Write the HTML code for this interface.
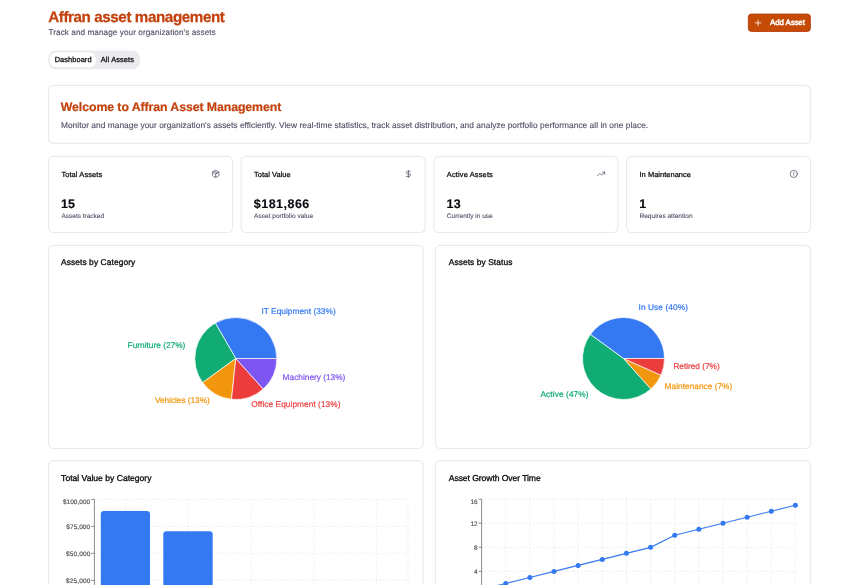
<!DOCTYPE html>
<html><head><meta charset="utf-8"><title>Affran asset management</title>
<style>
html,body{margin:0;padding:0;background:#fff;width:856px;height:585px;overflow:hidden}
svg{display:block;will-change:transform;font-family:"Liberation Sans", sans-serif;text-rendering:geometricPrecision}
</style></head>
<body>
<svg width="856" height="585" viewBox="0 0 856 585">
<text x="48.20" y="22.00" font-size="15.2" font-weight="700" fill="#c2410c" textLength="176.66" lengthAdjust="spacing" stroke="#c2410c" stroke-width="0.25">Affran asset management</text>
<text x="48.50" y="34.80" font-size="8.2" fill="#4f4f66" textLength="167.17" lengthAdjust="spacing" stroke="#4f4f66" stroke-width="0.12">Track and manage your organization's assets</text>
<rect x="748.30" y="14.00" width="62.10" height="17.50" rx="3.2" fill="#c54a05" stroke="#b63505" stroke-width="0.8" />
<path d="M755.3 22.9H760.9M758.1 20.1V25.7" stroke="#fff" stroke-width="0.8" stroke-linecap="round"/>
<text x="770.10" y="25.40" font-size="7.9" fill="#fff" textLength="34.75" lengthAdjust="spacing" stroke="#fff" stroke-width="0.45">Add Asset</text>
<rect x="48.20" y="50.60" width="91.80" height="18.60" rx="7.5" fill="#ebebef" />
<rect x="49.80" y="52.50" width="46.00" height="14.80" rx="6.2" fill="#fff" />
<text x="54.70" y="62.20" font-size="7.4" fill="#0a0a0f" textLength="36.82" lengthAdjust="spacing" stroke="#0a0a0f" stroke-width="0.28">Dashboard</text>
<text x="100.80" y="62.20" font-size="7.4" fill="#0a0a0f" textLength="33.12" lengthAdjust="spacing" stroke="#0a0a0f" stroke-width="0.28">All Assets</text>
<rect x="48.50" y="85.30" width="762.20" height="58.10" rx="5" fill="#fff" stroke="#ebebeb" stroke-width="1.15" />
<text x="60.80" y="110.80" font-size="12.3" font-weight="700" fill="#c2410c" textLength="220.46" lengthAdjust="spacing" stroke="#c2410c" stroke-width="0.2">Welcome to Affran Asset Management</text>
<text x="60.90" y="128.00" font-size="8.4" fill="#4f4f66" textLength="587.29" lengthAdjust="spacing" stroke="#4f4f66" stroke-width="0.12">Monitor and manage your organization's assets efficiently. View real-time statistics, track asset distribution, and analyze portfolio performance all in one place.</text>
<rect x="48.50" y="156.40" width="184.00" height="76.10" rx="5" fill="#fff" stroke="#ebebeb" stroke-width="1.15" />
<text x="61.40" y="176.90" font-size="7.45" fill="#0a0a0f" textLength="40.72" lengthAdjust="spacing" stroke="#0a0a0f" stroke-width="0.24">Total Assets</text>
<text x="61.10" y="207.90" font-size="12.5" font-weight="700" fill="#0a0a0f" textLength="13.78" lengthAdjust="spacing" stroke="#0a0a0f" stroke-width="0.15">15</text>
<text x="61.40" y="218.10" font-size="6.55" fill="#4f4f66" textLength="42.76" lengthAdjust="spacing" stroke="#4f4f66" stroke-width="0.1">Assets tracked</text>
<g transform="translate(211.40,169.60) scale(0.3583)" fill="none" stroke="#4f4f66" stroke-width="2" stroke-linecap="round" stroke-linejoin="round"><path d="M11 21.73a2 2 0 0 0 2 0l7-4A2 2 0 0 0 21 16V8a2 2 0 0 0-1-1.73l-7-4a2 2 0 0 0-2 0l-7 4A2 2 0 0 0 3 8v8a2 2 0 0 0 1 1.73z"/><path d="M12 22V12"/><path d="m3.3 7 7.703 4.734a2 2 0 0 0 1.994 0L20.7 7"/><path d="m7.5 4.27 9 5.15"/></g>
<rect x="241.20" y="156.40" width="184.00" height="76.10" rx="5" fill="#fff" stroke="#ebebeb" stroke-width="1.15" />
<text x="254.10" y="176.90" font-size="7.45" fill="#0a0a0f" textLength="36.52" lengthAdjust="spacing" stroke="#0a0a0f" stroke-width="0.24">Total Value</text>
<text x="253.80" y="207.90" font-size="12.5" font-weight="700" fill="#0a0a0f" textLength="55.48" lengthAdjust="spacing" stroke="#0a0a0f" stroke-width="0.15">$181,866</text>
<text x="254.10" y="218.10" font-size="6.55" fill="#4f4f66" textLength="58.96" lengthAdjust="spacing" stroke="#4f4f66" stroke-width="0.1">Asset portfolio value</text>
<g transform="translate(404.10,169.60) scale(0.3583)" fill="none" stroke="#4f4f66" stroke-width="2" stroke-linecap="round" stroke-linejoin="round"><line x1="12" x2="12" y1="2" y2="22"/><path d="M17 5H9.5a3.5 3.5 0 0 0 0 7h5a3.5 3.5 0 0 1 0 7H6"/></g>
<rect x="433.90" y="156.40" width="184.00" height="76.10" rx="5" fill="#fff" stroke="#ebebeb" stroke-width="1.15" />
<text x="446.80" y="176.90" font-size="7.45" fill="#0a0a0f" textLength="46.02" lengthAdjust="spacing" stroke="#0a0a0f" stroke-width="0.24">Active Assets</text>
<text x="446.50" y="207.90" font-size="12.5" font-weight="700" fill="#0a0a0f" textLength="14.18" lengthAdjust="spacing" stroke="#0a0a0f" stroke-width="0.15">13</text>
<text x="446.80" y="218.10" font-size="6.55" fill="#4f4f66" textLength="45.96" lengthAdjust="spacing" stroke="#4f4f66" stroke-width="0.1">Currently in use</text>
<g transform="translate(596.80,169.60) scale(0.3583)" fill="none" stroke="#4f4f66" stroke-width="2" stroke-linecap="round" stroke-linejoin="round"><polyline points="22 7 13.5 15.5 8.5 10.5 2 17"/><polyline points="16 7 22 7 22 13"/></g>
<rect x="626.60" y="156.40" width="184.00" height="76.10" rx="5" fill="#fff" stroke="#ebebeb" stroke-width="1.15" />
<text x="639.50" y="176.90" font-size="7.45" fill="#0a0a0f" textLength="51.42" lengthAdjust="spacing" stroke="#0a0a0f" stroke-width="0.24">In Maintenance</text>
<text x="639.20" y="207.90" font-size="12.5" font-weight="700" fill="#0a0a0f" textLength="5.67" lengthAdjust="spacing" stroke="#0a0a0f" stroke-width="0.15">1</text>
<text x="639.50" y="218.10" font-size="6.55" fill="#4f4f66" textLength="53.06" lengthAdjust="spacing" stroke="#4f4f66" stroke-width="0.1">Requires attention</text>
<g transform="translate(789.50,169.60) scale(0.3583)" fill="none" stroke="#4f4f66" stroke-width="2" stroke-linecap="round" stroke-linejoin="round"><circle cx="12" cy="12" r="10"/><line x1="12" x2="12" y1="8" y2="12"/><line x1="12" x2="12.01" y1="16" y2="16"/></g>
<rect x="48.50" y="245.30" width="374.70" height="203.20" rx="5" fill="#fff" stroke="#ebebeb" stroke-width="1.15" />
<rect x="435.50" y="245.30" width="375.20" height="203.20" rx="5" fill="#fff" stroke="#ebebeb" stroke-width="1.15" />
<rect x="48.50" y="460.60" width="374.70" height="159.40" rx="5" fill="#fff" stroke="#ebebeb" stroke-width="1.15" />
<rect x="435.50" y="460.60" width="375.20" height="159.40" rx="5" fill="#fff" stroke="#ebebeb" stroke-width="1.15" />
<text x="61.00" y="265.40" font-size="8.4" fill="#0a0a0f" textLength="74.29" lengthAdjust="spacing" stroke="#0a0a0f" stroke-width="0.3">Assets by Category</text>
<text x="448.70" y="265.40" font-size="8.4" fill="#0a0a0f" textLength="63.69" lengthAdjust="spacing" stroke="#0a0a0f" stroke-width="0.3">Assets by Status</text>
<text x="61.10" y="480.90" font-size="8.6" fill="#0a0a0f" textLength="90.40" lengthAdjust="spacing" stroke="#0a0a0f" stroke-width="0.3">Total Value by Category</text>
<text x="448.80" y="480.90" font-size="8.6" fill="#0a0a0f" textLength="91.90" lengthAdjust="spacing" stroke="#0a0a0f" stroke-width="0.3">Asset Growth Over Time</text>
<path d="M235.80 358.50L276.80 358.50A41.0 41.0 0 0 0 215.30 322.99Z" fill="#3579f2" stroke="#fff" stroke-width="0.7" stroke-linejoin="round"/>
<path d="M235.80 358.50L215.30 322.99A41.0 41.0 0 0 0 202.63 382.60Z" fill="#10ac74" stroke="#fff" stroke-width="0.7" stroke-linejoin="round"/>
<path d="M235.80 358.50L202.63 382.60A41.0 41.0 0 0 0 231.51 399.28Z" fill="#f2960d" stroke="#fff" stroke-width="0.7" stroke-linejoin="round"/>
<path d="M235.80 358.50L231.51 399.28A41.0 41.0 0 0 0 263.23 388.97Z" fill="#ec3c3c" stroke="#fff" stroke-width="0.7" stroke-linejoin="round"/>
<path d="M235.80 358.50L263.23 388.97A41.0 41.0 0 0 0 276.80 358.50Z" fill="#7d55f2" stroke="#fff" stroke-width="0.7" stroke-linejoin="round"/>
<text x="261.50" y="314.00" font-size="8.3" fill="#3579f2" textLength="74.18" lengthAdjust="spacing" stroke="#3579f2" stroke-width="0.2">IT Equipment (33%)</text>
<text x="127.60" y="347.60" font-size="8.3" fill="#10ac74" textLength="57.68" lengthAdjust="spacing" stroke="#10ac74" stroke-width="0.2">Furniture (27%)</text>
<text x="282.60" y="379.80" font-size="8.3" fill="#7d55f2" textLength="62.78" lengthAdjust="spacing" stroke="#7d55f2" stroke-width="0.2">Machinery (13%)</text>
<text x="155.00" y="403.00" font-size="8.3" fill="#f2960d" textLength="54.78" lengthAdjust="spacing" stroke="#f2960d" stroke-width="0.2">Vehicles (13%)</text>
<text x="251.30" y="407.10" font-size="8.3" fill="#ec3c3c" textLength="89.18" lengthAdjust="spacing" stroke="#ec3c3c" stroke-width="0.2">Office Equipment (13%)</text>
<path d="M623.50 358.50L664.50 358.50A41.0 41.0 0 0 0 590.33 334.40Z" fill="#3579f2" stroke="#fff" stroke-width="0.7" stroke-linejoin="round"/>
<path d="M623.50 358.50L590.33 334.40A41.0 41.0 0 0 0 650.93 388.97Z" fill="#10ac74" stroke="#fff" stroke-width="0.7" stroke-linejoin="round"/>
<path d="M623.50 358.50L650.93 388.97A41.0 41.0 0 0 0 660.96 375.18Z" fill="#f2960d" stroke="#fff" stroke-width="0.7" stroke-linejoin="round"/>
<path d="M623.50 358.50L660.96 375.18A41.0 41.0 0 0 0 664.50 358.50Z" fill="#ec3c3c" stroke="#fff" stroke-width="0.7" stroke-linejoin="round"/>
<text x="638.50" y="310.30" font-size="8.3" fill="#3579f2" textLength="49.48" lengthAdjust="spacing" stroke="#3579f2" stroke-width="0.2">In Use (40%)</text>
<text x="673.40" y="369.30" font-size="8.3" fill="#ec3c3c" textLength="46.28" lengthAdjust="spacing" stroke="#ec3c3c" stroke-width="0.2">Retired (7%)</text>
<text x="664.60" y="389.00" font-size="8.3" fill="#f2960d" textLength="67.68" lengthAdjust="spacing" stroke="#f2960d" stroke-width="0.2">Maintenance (7%)</text>
<text x="540.40" y="397.10" font-size="8.3" fill="#10ac74" textLength="48.18" lengthAdjust="spacing" stroke="#10ac74" stroke-width="0.2">Active (47%)</text>
<line x1="94.4" y1="499.4" x2="408.0" y2="499.4" stroke="#e3e3e3" stroke-width="0.6" stroke-dasharray="1.6 1.6"/>
<line x1="94.4" y1="526.4" x2="408.0" y2="526.4" stroke="#e3e3e3" stroke-width="0.6" stroke-dasharray="1.6 1.6"/>
<line x1="94.4" y1="553.3" x2="408.0" y2="553.3" stroke="#e3e3e3" stroke-width="0.6" stroke-dasharray="1.6 1.6"/>
<line x1="94.4" y1="580.4" x2="408.0" y2="580.4" stroke="#e3e3e3" stroke-width="0.6" stroke-dasharray="1.6 1.6"/>
<line x1="125.76" y1="499.4" x2="125.76" y2="607" stroke="#e3e3e3" stroke-width="0.6" stroke-dasharray="1.6 1.6"/>
<line x1="188.48" y1="499.4" x2="188.48" y2="607" stroke="#e3e3e3" stroke-width="0.6" stroke-dasharray="1.6 1.6"/>
<line x1="251.20" y1="499.4" x2="251.20" y2="607" stroke="#e3e3e3" stroke-width="0.6" stroke-dasharray="1.6 1.6"/>
<line x1="313.92" y1="499.4" x2="313.92" y2="607" stroke="#e3e3e3" stroke-width="0.6" stroke-dasharray="1.6 1.6"/>
<line x1="376.64" y1="499.4" x2="376.64" y2="607" stroke="#e3e3e3" stroke-width="0.6" stroke-dasharray="1.6 1.6"/>
<line x1="408.00" y1="499.4" x2="408.00" y2="607" stroke="#e3e3e3" stroke-width="0.6" stroke-dasharray="1.6 1.6"/>
<path d="M100.8 600V514.0Q100.8 511.0 103.8 511.0H147.0Q150.0 511.0 150.0 514.0V600Z" fill="#3579f2"/>
<path d="M163.3 600V534.2Q163.3 531.2 166.3 531.2H209.7Q212.7 531.2 212.7 534.2V600Z" fill="#3579f2"/>
<line x1="94.4" y1="499.4" x2="94.4" y2="607" stroke="#767676" stroke-width="0.85"/>
<line x1="91.2" y1="499.4" x2="94.4" y2="499.4" stroke="#767676" stroke-width="0.85"/>
<line x1="91.2" y1="526.4" x2="94.4" y2="526.4" stroke="#767676" stroke-width="0.85"/>
<line x1="91.2" y1="553.3" x2="94.4" y2="553.3" stroke="#767676" stroke-width="0.85"/>
<line x1="91.2" y1="580.4" x2="94.4" y2="580.4" stroke="#767676" stroke-width="0.85"/>
<text x="62.90" y="503.50" font-size="6.5" fill="#4a4a4a" textLength="27.26" lengthAdjust="spacing" stroke="#4a4a4a" stroke-width="0.14">$100,000</text>
<text x="66.30" y="528.80" font-size="6.5" fill="#4a4a4a" textLength="23.85" lengthAdjust="spacing" stroke="#4a4a4a" stroke-width="0.14">$75,000</text>
<text x="66.10" y="555.80" font-size="6.5" fill="#4a4a4a" textLength="24.16" lengthAdjust="spacing" stroke="#4a4a4a" stroke-width="0.14">$50,000</text>
<text x="66.10" y="583.00" font-size="6.5" fill="#4a4a4a" textLength="24.16" lengthAdjust="spacing" stroke="#4a4a4a" stroke-width="0.14">$25,000</text>
<line x1="481.6" y1="499.2" x2="795.4" y2="499.2" stroke="#e3e3e3" stroke-width="0.6" stroke-dasharray="1.6 1.6"/>
<line x1="481.6" y1="523.2" x2="795.4" y2="523.2" stroke="#e3e3e3" stroke-width="0.6" stroke-dasharray="1.6 1.6"/>
<line x1="481.6" y1="547.3" x2="795.4" y2="547.3" stroke="#e3e3e3" stroke-width="0.6" stroke-dasharray="1.6 1.6"/>
<line x1="481.6" y1="571.4" x2="795.4" y2="571.4" stroke="#e3e3e3" stroke-width="0.6" stroke-dasharray="1.6 1.6"/>
<line x1="505.74" y1="499.2" x2="505.74" y2="600" stroke="#e3e3e3" stroke-width="0.6" stroke-dasharray="1.6 1.6"/>
<line x1="529.88" y1="499.2" x2="529.88" y2="600" stroke="#e3e3e3" stroke-width="0.6" stroke-dasharray="1.6 1.6"/>
<line x1="554.02" y1="499.2" x2="554.02" y2="600" stroke="#e3e3e3" stroke-width="0.6" stroke-dasharray="1.6 1.6"/>
<line x1="578.15" y1="499.2" x2="578.15" y2="600" stroke="#e3e3e3" stroke-width="0.6" stroke-dasharray="1.6 1.6"/>
<line x1="602.29" y1="499.2" x2="602.29" y2="600" stroke="#e3e3e3" stroke-width="0.6" stroke-dasharray="1.6 1.6"/>
<line x1="626.43" y1="499.2" x2="626.43" y2="600" stroke="#e3e3e3" stroke-width="0.6" stroke-dasharray="1.6 1.6"/>
<line x1="650.57" y1="499.2" x2="650.57" y2="600" stroke="#e3e3e3" stroke-width="0.6" stroke-dasharray="1.6 1.6"/>
<line x1="674.71" y1="499.2" x2="674.71" y2="600" stroke="#e3e3e3" stroke-width="0.6" stroke-dasharray="1.6 1.6"/>
<line x1="698.85" y1="499.2" x2="698.85" y2="600" stroke="#e3e3e3" stroke-width="0.6" stroke-dasharray="1.6 1.6"/>
<line x1="722.98" y1="499.2" x2="722.98" y2="600" stroke="#e3e3e3" stroke-width="0.6" stroke-dasharray="1.6 1.6"/>
<line x1="747.12" y1="499.2" x2="747.12" y2="600" stroke="#e3e3e3" stroke-width="0.6" stroke-dasharray="1.6 1.6"/>
<line x1="771.26" y1="499.2" x2="771.26" y2="600" stroke="#e3e3e3" stroke-width="0.6" stroke-dasharray="1.6 1.6"/>
<line x1="795.40" y1="499.2" x2="795.40" y2="600" stroke="#e3e3e3" stroke-width="0.6" stroke-dasharray="1.6 1.6"/>
<line x1="481.6" y1="499.2" x2="481.6" y2="600" stroke="#767676" stroke-width="0.85"/>
<line x1="478.7" y1="499.2" x2="481.6" y2="499.2" stroke="#767676" stroke-width="0.85"/>
<line x1="478.7" y1="523.2" x2="481.6" y2="523.2" stroke="#767676" stroke-width="0.85"/>
<line x1="478.7" y1="547.3" x2="481.6" y2="547.3" stroke="#767676" stroke-width="0.85"/>
<line x1="478.7" y1="571.4" x2="481.6" y2="571.4" stroke="#767676" stroke-width="0.85"/>
<text x="477.60" y="503.60" font-size="6.4" fill="#4a4a4a" text-anchor="end" stroke="#4a4a4a" stroke-width="0.14">16</text>
<text x="477.60" y="525.70" font-size="6.4" fill="#4a4a4a" text-anchor="end" stroke="#4a4a4a" stroke-width="0.14">12</text>
<text x="477.60" y="549.70" font-size="6.4" fill="#4a4a4a" text-anchor="end" stroke="#4a4a4a" stroke-width="0.14">8</text>
<text x="477.60" y="573.50" font-size="6.4" fill="#4a4a4a" text-anchor="end" stroke="#4a4a4a" stroke-width="0.14">4</text>
<polyline points="481.60,589.48 505.74,583.46 529.88,577.44 554.02,571.42 578.15,565.40 602.29,559.38 626.43,553.36 650.57,547.34 674.71,535.30 698.85,529.28 722.98,523.26 747.12,517.24 771.26,511.22 795.40,505.20" fill="none" stroke="#3579f2" stroke-width="1.15"/>
<circle cx="481.60" cy="589.48" r="2.5" fill="#3579f2"/>
<circle cx="505.74" cy="583.46" r="2.5" fill="#3579f2"/>
<circle cx="529.88" cy="577.44" r="2.5" fill="#3579f2"/>
<circle cx="554.02" cy="571.42" r="2.5" fill="#3579f2"/>
<circle cx="578.15" cy="565.40" r="2.5" fill="#3579f2"/>
<circle cx="602.29" cy="559.38" r="2.5" fill="#3579f2"/>
<circle cx="626.43" cy="553.36" r="2.5" fill="#3579f2"/>
<circle cx="650.57" cy="547.34" r="2.5" fill="#3579f2"/>
<circle cx="674.71" cy="535.30" r="2.5" fill="#3579f2"/>
<circle cx="698.85" cy="529.28" r="2.5" fill="#3579f2"/>
<circle cx="722.98" cy="523.26" r="2.5" fill="#3579f2"/>
<circle cx="747.12" cy="517.24" r="2.5" fill="#3579f2"/>
<circle cx="771.26" cy="511.22" r="2.5" fill="#3579f2"/>
<circle cx="795.40" cy="505.20" r="2.5" fill="#3579f2"/>
</svg>
</body></html>
